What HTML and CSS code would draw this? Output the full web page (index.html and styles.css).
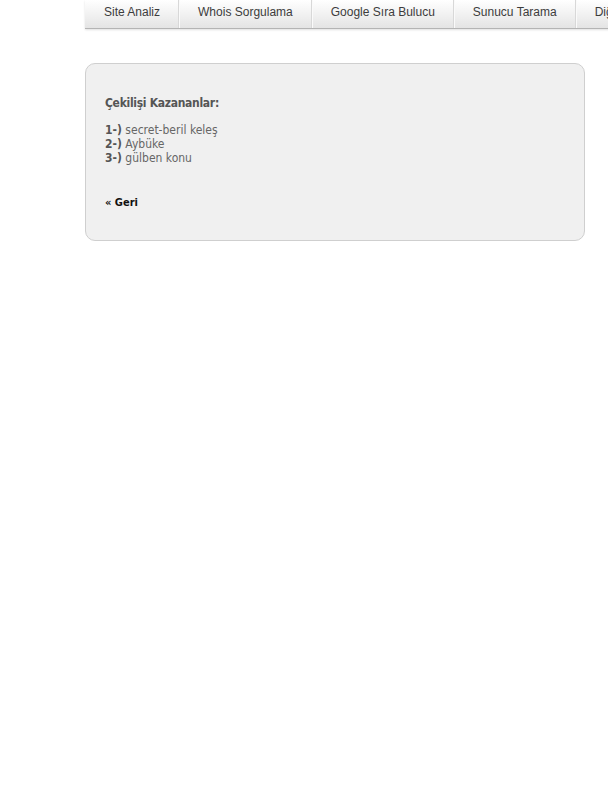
FILE: index.html
```html
<!DOCTYPE html>
<html lang="tr">
<head>
<meta charset="utf-8">
<title>Çekiliş</title>
<link rel="stylesheet" href="styles.css">
</head>
<body>
<div class="page">
  <nav class="menu">
    <a class="menu-item" href="#">Site Analiz</a>
    <a class="menu-item" href="#">Whois Sorgulama</a>
    <a class="menu-item" href="#">Google Sıra Bulucu</a>
    <a class="menu-item" href="#">Sunucu Tarama</a>
    <a class="menu-item" href="#">Diğer Araçlar</a>
  </nav>
  <div class="box">
    <h2 class="title">Çekilişi Kazananlar:</h2>
    <ul class="winners">
      <li><b>1-)</b> secret-beril keleş</li>
      <li><b>2-)</b> Aybüke</li>
      <li><b>3-)</b> gülben konu</li>
    </ul>
    <a class="back" href="#">« Geri</a>
  </div>
</div>
</body>
</html>
```
FILE: styles.css
```css
html, body {
  margin: 0;
  padding: 0;
  background: #fff;
  overflow: hidden;
}
.page {
  margin-left: 85px;
  width: 700px;
}
.menu {
  display: flex;
  height: 28px;
  border-bottom: 1px solid #b4b4b4;
  background: linear-gradient(#ffffff, #e4e4e4);
  box-shadow: 0 1px 2px rgba(0,0,0,0.12);
  white-space: nowrap;
}
.menu-item {
  display: block;
  padding: 0 18px 0 19px;
  line-height: 25px;
  font-family: "Liberation Sans", Arial, sans-serif;
  font-size: 12px;
  color: #3c3c3c;
  text-decoration: none;
  border-right: 1px solid #d8d8d8;
  box-shadow: 1px 0 0 #fafafa;
}
.box {
  margin-top: 34px;
  width: 500px;
  border: 1px solid #cfcfcf;
  border-radius: 10px;
  background: #f0f0f0;
  padding: 32px 19px 29px 19px;
  box-sizing: border-box;
  height: 178px;
  font-family: "DejaVu Sans", Tahoma, sans-serif;
  font-stretch: condensed;
  font-size: 12px;
  line-height: 14px;
  color: #666;
}
.title {
  margin: 0 0 13px 0;
  font-size: 12px;
  line-height: 14px;
  font-weight: bold;
  letter-spacing: -0.3px;
  color: #555;
}
.winners {
  list-style: none;
  margin: 0 0 31px 0;
  padding: 0;
}
.winners b {
  color: #555;
}
.back {
  display: block;
  font-size: 11px;
  line-height: 14px;
  font-weight: bold;
  color: #111;
  text-decoration: none;
}
```
